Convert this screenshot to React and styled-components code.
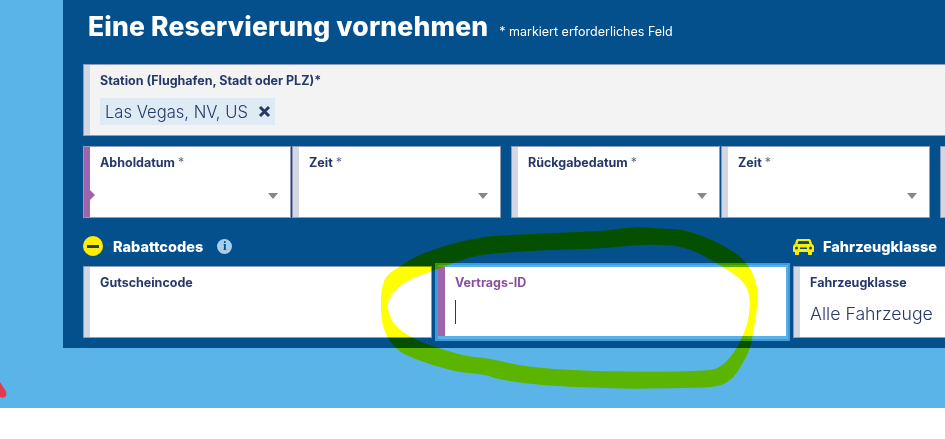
import React from "react";
import styled, { createGlobalStyle } from "styled-components";

const Global = createGlobalStyle`
  html, body { margin: 0; padding: 0; background: #fff; overflow: hidden; }
  body { font-family: Inter, "Liberation Sans", sans-serif; }
`;

const Page = styled.div`
  position: relative;
  width: 945px;
  height: 408px;
  background: #5ab4e8;
  overflow: hidden;
`;
const Panel = styled.main`
  margin-left: 63px;
  width: 882px;
  height: 348px;
  box-sizing: border-box;
  padding: 8px 0 0 20px;
  background: #04508c;
  overflow: hidden;
`;
const Header = styled.header`
  display: flex;
  align-items: baseline;
  height: 56px;
  padding-left: 5px;
`;
const Title = styled.h1`
  margin: 0;
  font-size: 26.5px;
  line-height: 36px;
  font-weight: 800;
  color: #fff;
  letter-spacing: 0.17px;
  white-space: nowrap;
`;
const Hint = styled.span`
  margin-left: 11px;
  font-size: 12.5px;
  color: #fff;
  white-space: nowrap;
`;
const Row = styled.div`
  display: flex;
  align-items: flex-start;
  width: 900px;
  margin-top: ${(p) => p.$mt || 0}px;
`;
const Field = styled.div`
  position: relative;
  flex: none;
  box-sizing: border-box;
  width: ${(p) => p.$w}px;
  height: 72px;
  margin-left: ${(p) => p.$ml || 0}px;
  padding: 8px 0 0 16px;
  background: linear-gradient(
    to right,
    ${(p) => p.$bar || "#d3d7e3"} 6px,
    ${(p) => p.$bg || "#fff"} 6px
  );
  border: 1px solid #8f9cba;
`;
const FocusField = styled.div`
  position: relative;
  flex: none;
  box-sizing: border-box;
  width: 355px;
  height: 78px;
  margin: -3px 0 0 3px;
  padding: 10px 0 0 17px;
  background: #fff;
  border: 2px solid #3f9bda;
  border-left-width: 3px;
  box-shadow: inset 0 2px 0 #58b2e8, inset -2px 0 0 #58b2e8, inset 0 -3px 0 #58b2e8;
`;
const FocusBar = styled.span`
  position: absolute;
  left: 0;
  top: 2px;
  bottom: 3px;
  width: 7px;
  background: #a064ac;
`;
const Label = styled.label`
  display: block;
  font-size: 12.5px;
  line-height: 16px;
  font-weight: 700;
  color: ${(p) => p.$color || "#263868"};
  white-space: nowrap;
`;
const Star = styled.span`
  font-weight: 400;
  color: #5a6a90;
`;
const Chip = styled.span`
  display: flex;
  align-items: center;
  gap: 10px;
  width: fit-content;
  height: 27px;
  margin-top: 9px;
  padding: 0 4px 0 5px;
  background: #deebf4;
  font-size: 16.6px;
  font-weight: 300;
  color: #263868;
  white-space: nowrap;
`;
const Value = styled.div`
  margin-top: 9px;
  font-size: 17.7px;
  line-height: 28px;
  font-weight: 300;
  color: #263868;
  white-space: nowrap;
`;
const Caret = styled.span`
  position: absolute;
  right: 12px;
  top: 46px;
  border-left: 5px solid transparent;
  border-right: 5px solid transparent;
  border-top: 6px solid #86878c;
`;
const Notch = styled.span`
  position: absolute;
  left: 6px;
  top: 43px;
  border-top: 5px solid transparent;
  border-bottom: 5px solid transparent;
  border-left: 5px solid #a064ac;
`;
const Cursor = styled.span`
  display: block;
  width: 1px;
  height: 24px;
  margin-top: 9px;
  background: #263868;
`;
const SectionBar = styled.div`
  display: flex;
  align-items: center;
  height: 22px;
  margin: 17px 0 9px;
`;
const LeftGroup = styled.div`
  display: flex;
  flex: none;
  align-items: center;
  width: 710px;
`;
const SectionTitle = styled.span`
  font-size: 14.5px;
  font-weight: 800;
  color: #fff;
  white-space: nowrap;
`;
const MinusBadge = styled.span`
  display: flex;
  flex: none;
  align-items: center;
  justify-content: center;
  width: 20px;
  height: 20px;
  margin-right: 10px;
  border-radius: 50%;
  background: #ffee00;
  &::after {
    content: "";
    width: 12px;
    height: 3px;
    background: #1f3a6e;
  }
`;
const InfoBadge = styled.span`
  display: flex;
  flex: none;
  align-items: center;
  justify-content: center;
  width: 15px;
  height: 15px;
  margin-left: 14px;
  border-radius: 50%;
  background: #a9cde8;
  font-family: "Liberation Serif", serif;
  font-size: 13px;
  font-weight: 700;
  color: #04508c;
`;
const CarSlot = styled.span`
  display: flex;
  flex: none;
  margin-right: 9px;
`;
const Ring = styled.svg`
  position: absolute;
  left: 0;
  top: 0;
  width: 945px;
  height: 408px;
  mix-blend-mode: multiply;
  pointer-events: none;
`;
const Blob = styled.svg`
  position: absolute;
  left: 0;
  top: 377px;
`;

const Remove = () => (
  <svg width="13" height="13" viewBox="0 0 13 13">
    <path d="M2 2 L11 11 M11 2 L2 11" stroke="#263868" strokeWidth="3" fill="none" />
  </svg>
);
const Car = () => (
  <svg width="21" height="17" viewBox="0 0 21 17">
    <path
      fill="#ffee00"
      d="M5 1h11c1 0 1.600.6 2 1.600L19 6c1.200.6 2 1.600 2 3v4c0 .6-.4 1-1 1h-1v2c0 .6-.4 1-1 1h-2c-.6 0-1-.4-1-1v-2H6v2c0 .6-.4 1-1 1H3c-.6 0-1-.4-1-1v-2H1c-.6 0-1-.4-1-1V9c0-1.400.8-2.400 2-3l1-3.400C3.400 1.600 4 1 5 1zm.4 2L4.500 6h12l-.9-3H5.400zM3.500 8.500a1.500 1.500 0 1 0 0 3 1.500 1.500 0 0 0 0-3zm14 0a1.500 1.500 0 1 0 0 3 1.500 1.500 0 0 0 0-3zM7 9.500v1.500h7V9.500H7z"
      fillRule="evenodd"
    />
  </svg>
);

const outer = [[380.7,303],[381.7,286.7],[386.7,275],[400,266],[418.3,255],[446.7,245],[470,239.3],[490,236],[550,233],[603.3,231],[640,226],[653.3,228.7],[680,229],[700,235],[723.3,245],[743.3,258.3],[753.3,273.3],[757.7,288.3],[757.3,308.3],[753.3,331.7],[750,350],[741.7,365],[733.3,378.3],[720,386.7],[693,387.7],[633,389],[593,387.7],[546.7,386],[500,380],[483,374],[460,372.7],[431.7,365],[405,355],[395,348],[386.7,336.7],[381.7,323]];
const inner = [[387.3,308],[388.3,300],[395,290],[408,280],[431.7,271],[470,257],[490,253.7],[536.7,250.3],[603.3,248.7],[640,244.3],[670,245.3],[680,246.7],[696.7,251.7],[716.7,263.3],[733.3,273.3],[745,283.3],[750.7,298.3],[748.3,321.7],[741.7,338.3],[735,351.7],[723.3,365],[713.3,370],[693,371],[660,372],[593,371],[553,369],[523,366],[500,361],[483,357.3],[466.7,356.7],[428,345],[410,336.7],[400,330],[391.7,321.7]];
const smooth = (pts) => {
  const mid = (a, b) => `${(a[0] + b[0]) / 2} ${(a[1] + b[1]) / 2}`;
  let d = `M${mid(pts[pts.length - 1], pts[0])}`;
  pts.forEach((p, i) => {
    d += ` Q${p[0]} ${p[1]} ${mid(p, pts[(i + 1) % pts.length])}`;
  });
  return d + " Z";
};

export default function App() {
  return (
    <>
      <Global />
      <Page>
        <Panel>
          <Header>
            <Title>Eine Reservierung vornehmen</Title>
            <Hint>* markiert erforderliches Feld</Hint>
          </Header>
          <Row>
            <Field $w={880} $bg="#f3f3f3">
              <Label>Station (Flughafen, Stadt oder PLZ)*</Label>
              <Chip>Las Vegas, NV, US <Remove /></Chip>
            </Field>
          </Row>
          <Row $mt={10}>
            <Field $w={208} $bar="#a064ac"><Label>Abholdatum <Star>*</Star></Label><Notch /><Caret /></Field>
            <Field $w={209} $ml={1}><Label>Zeit <Star>*</Star></Label><Caret /></Field>
            <Field $w={209} $ml={10}><Label>Rückgabedatum <Star>*</Star></Label><Caret /></Field>
            <Field $w={209} $ml={1}><Label>Zeit <Star>*</Star></Label><Caret /></Field>
            <Field $w={40} $ml={10} />
          </Row>
          <SectionBar>
            <LeftGroup>
              <MinusBadge />
              <SectionTitle>Rabattcodes</SectionTitle>
              <InfoBadge>i</InfoBadge>
            </LeftGroup>
            <CarSlot><Car /></CarSlot>
            <SectionTitle>Fahrzeugklasse</SectionTitle>
          </SectionBar>
          <Row>
            <Field $w={349}><Label>Gutscheincode</Label></Field>
            <FocusField>
              <FocusBar />
              <Label $color="#8a4fa0">Vertrags-ID</Label>
              <Cursor />
            </FocusField>
            <Field $w={180} $ml={3}>
              <Label>Fahrzeugklasse</Label>
              <Value>Alle Fahrzeuge</Value>
            </Field>
          </Row>
        </Panel>
        <Blob width="8" height="22" viewBox="0 0 8 22">
          <path d="M0 5 L3 10 C6 13 7 16 6 19 C4 21 2 21 0 20 Z" fill="#e03a50" />
        </Blob>
        <Ring viewBox="0 0 945 408">
          <path d={smooth(outer) + " " + smooth(inner)} fill="#ffff00" fillRule="evenodd" />
        </Ring>
      </Page>
    </>
  );
}
